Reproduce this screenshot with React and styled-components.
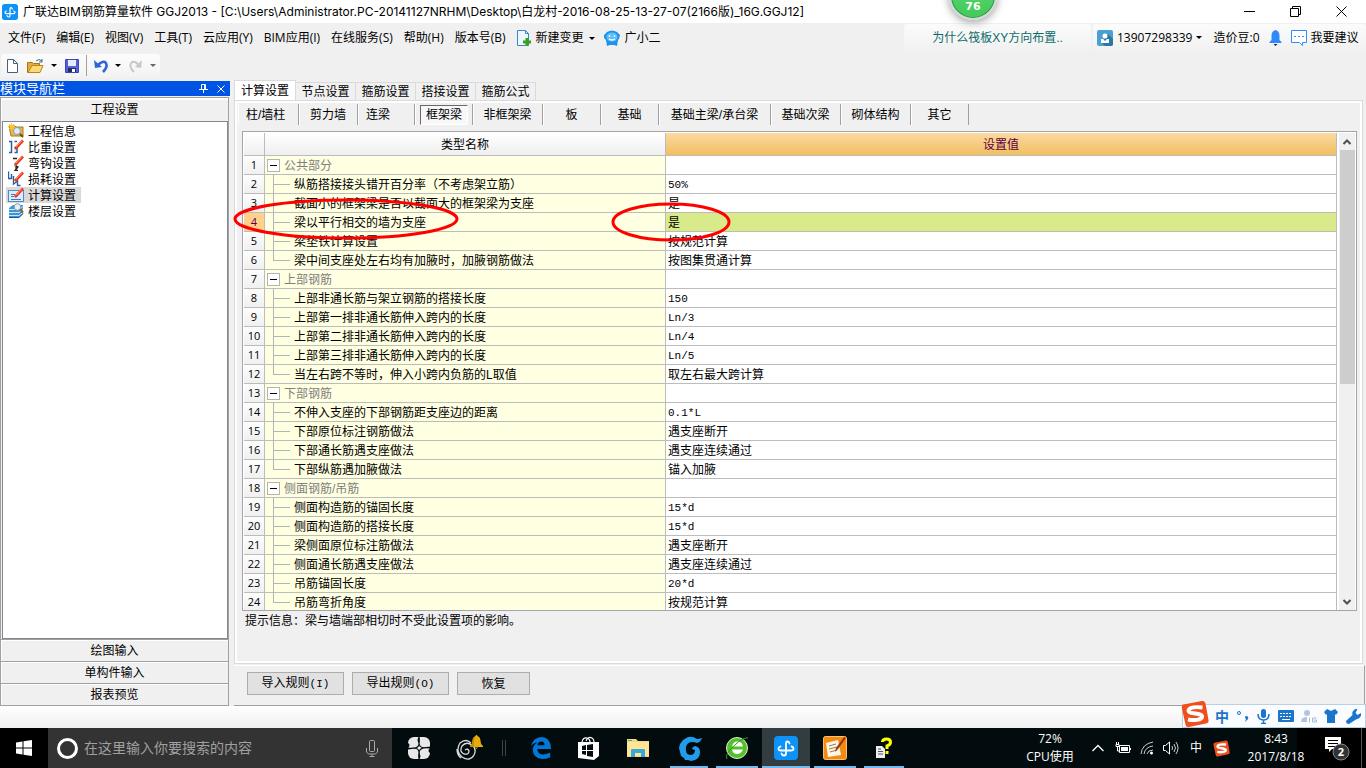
import React from "react";
import styled, { createGlobalStyle } from "styled-components";

const song = `"Liberation Sans", "Noto Sans CJK SC", sans-serif`;
const yahei = `"Open Sans", "Noto Sans CJK SC", sans-serif`;

const Global = createGlobalStyle`
  *, *::before, *::after { box-sizing: border-box; }
  html, body, #root { height: 100%; }
  body { margin: 0; background: #f0f0f0; overflow: hidden; }
  button { font: inherit; color: inherit; margin: 0; padding: 0; border: 0; background: none; border-radius: 0; }
  svg { display: block; flex: none; }
`;

const Screen = styled.div`
  position: relative;
  display: flex;
  flex-direction: column;
  height: 100vh;
  font: 12px/16px ${song};
  color: #000;
  white-space: nowrap;
`;
const Spacer = styled.div`flex: 1;`;

/* ---------- title bar ---------- */
const TitleBar = styled.header`
  display: flex;
  align-items: center;
  height: 23px;
  flex: none;
  background: #fff;
  font: 12px/20px ${yahei};
  padding: 0 2px;
`;
const Title = styled.h1`
  margin: 0 0 0 5px;
  font: 12px/22px Inter, "Noto Sans CJK SC", sans-serif;
`;
const WindowButton = styled.button`
  width: 46px;
  height: 20px;
  display: flex;
  align-items: center;
  justify-content: center;
`;
const SpeedBall = styled.div`
  position: absolute;
  top: -28px;
  left: 949px;
  width: 48px;
  height: 48px;
  border-radius: 50%;
  border: 2px solid #d5d8d5;
  background: linear-gradient(#5bd96b, #45c95c);
  box-shadow: inset 0 0 0 1px #239a48, 0 2px 8px #999;
  color: #fff;
  font: bold 11px/14px "DejaVu Sans", sans-serif;
  text-align: center;
  padding-top: 26px;
`;

/* ---------- menu ---------- */
const MenuBar = styled.nav`
  display: flex;
  align-items: center;
  flex: none;
  height: 28px;
  padding: 1px 0 0 8px;
  font: 12px/20px ${yahei};
`;
const MenuItem = styled.button`
  display: flex;
  align-items: center;
  gap: 5px;
  padding-top: 1px;
  margin-right: ${(p) => (p.$tight ? 9 : 11)}px;
  white-space: nowrap;
`;
const Caret = styled.span`
  width: 0;
  height: 0;
  border: 3px solid transparent;
  border-top-color: ${(p) => p.$color || "#000"};
  border-bottom: 0;
`;
const Tip = styled.a`
  align-self: stretch;
  width: 187px;
  margin-right: 2px;
  background: linear-gradient(#fbfbfb, #f1f1f1);
  border-radius: 3px;
  color: #0b6b6b;
  text-decoration: none;
  text-align: center;
  line-height: 29px;
  font-family: ${song};
`;
const Account = styled.div`
  align-self: stretch;
  display: flex;
  align-items: center;
  width: 273px;
  padding-left: 4px;
  background: linear-gradient(#fbfbfb, #f1f1f1);
  border-radius: 3px;
`;
const AccountItem = styled.button`
  display: flex;
  align-items: center;
  gap: 4px;
  margin-right: ${(p) => p.$after || 0}px;
  white-space: nowrap;
`;

/* ---------- tool bar ---------- */
const ToolRow = styled.div`
  flex: none;
  height: 29px;
  padding: 3px 0 0 1px;
`;
const ToolStrip = styled.div`
  display: flex;
  align-items: center;
  width: 159px;
  height: 23px;
  padding-left: 4px;
  border-radius: 3px;
  background: linear-gradient(#fcfcfc, #f3f3f3);
`;
const ToolButton = styled.button`
  display: flex;
  align-items: center;
  gap: 7px;
  margin-right: ${(p) => p.$after}px;
`;
const ToolLine = styled.span`
  width: 1px;
  height: 21px;
  margin-right: 7px;
  background: #a0a0a0;
`;

/* ---------- work area ---------- */
const Work = styled.div`
  display: flex;
  flex: 1;
  min-height: 0;
`;
const Side = styled.aside`
  display: flex;
  flex-direction: column;
  flex: none;
  width: 230px;
  padding-top: 1px;
`;
const SideTitle = styled.div`
  display: flex;
  align-items: center;
  height: 15px;
  flex: none;
  background: #0054e3;
  color: #fff;
  font-size: 13px;
  line-height: 15px;
  button { width: 18px; display: flex; justify-content: center; }
`;
const SideBody = styled.div`
  display: flex;
  flex-direction: column;
  flex: 1;
  min-height: 0;
  margin: 1px 1px 0 0;
  border: 1px solid #a0a0a0;
`;
const SideTab = styled.button`
  height: 22px;
  flex: none;
  border-top: 1px solid ${(p) => (p.$first ? "#fff" : "#a0a0a0")};
  box-shadow: inset 1px 1px 0 #fff;
  text-align: center;
`;
const SideList = styled.ul`
  flex: 1;
  min-height: 0;
  list-style: none;
  margin: 1px 0 0 1px;
  padding: 1px 3px;
  border: 1px solid #828790;
  background: #fff;
`;
const SideItem = styled.li`
  display: flex;
  align-items: center;
  width: 75px;
  height: 16px;
  gap: 4px;
  padding-left: 2px;
  background: ${(p) => (p.$on ? "#d9d9d9" : "none")};
  span { padding-top: 2px; }
`;

const Main = styled.main`
  display: flex;
  flex-direction: column;
  flex: 1;
  min-width: 0;
  padding: 0 1px 0 4px;
`;
const Tabs = styled.div`
  display: flex;
  align-items: flex-end;
  flex: none;
  height: 21px;
  margin-bottom: -1px;
`;
const Tab = styled.button`
  position: relative;
  height: ${(p) => (p.$on ? 21 : 19)}px;
  width: ${(p) => (p.$on ? 62 : 60)}px;
  line-height: 18px;
  text-align: center;
  border: 1px solid #dadada;
  border-left-width: ${(p) => (p.$on ? 1 : 0)}px;
  border-bottom-color: ${(p) => (p.$on ? "#fff" : "#dadada")};
  background: ${(p) => (p.$on ? "#fff" : "#f0f0f0")};
`;
const Panel = styled.section`
  position: relative;
  display: flex;
  flex-direction: column;
  flex: 1;
  min-height: 0;
  margin-right: 2px;
  border: 1px solid #dadada;
  box-shadow: inset 0 0 0 2px #fff;
  padding: 3px 5px 2px 7px;
`;
const Kinds = styled.div`
  display: flex;
  flex: none;
  height: 21px;
  margin: 0 0 6px -4px;
`;
const Kind = styled.button`
  width: ${(p) => p.$w}px;
  height: 21px;
  line-height: 20px;
  border-right: 1px solid #a0a0a0;
  box-shadow: inset 1px 0 0 #fff;
  text-align: ${(p) => (p.$left ? "left" : "center")};
  padding-left: ${(p) => (p.$left ? 8 : 0)}px;
  span {
    display: block;
    margin: 1px 4px 0 5px;
    height: 20px;
    line-height: 18px;
    border: 1px solid #fff;
    border-top-color: #696969;
    border-left-color: #696969;
    background: #f8f8f8;
  }
`;
const Sheet = styled.div`
  display: flex;
  flex: 1;
  min-height: 0;
  padding: 1px 1px 0 1px;
  border: 1px solid #a5a5a9;
  background: #fff;
`;
const Scroller = styled.div`
  flex: 1;
  min-width: 0;
  overflow: hidden;
`;
const Grid = styled.table`
  width: 100%;
  table-layout: fixed;
  border-collapse: separate;
  border-spacing: 0;
`;
const Head = styled.th`
  height: 23px;
  padding: 2px 0 0;
  font-weight: normal;
  color: ${(p) => (p.$hot ? "#5a0046" : "#000")};
  background: ${(p) => (p.$hot ? "linear-gradient(#fbd9a2, #f2bf60)" : "linear-gradient(#fff, #efefef)")};
  border-right: 1px solid #bcbcbc;
  border-bottom: 1px solid #bcbcbc;
`;
const Num = styled.th`
  height: 19px;
  padding: 0;
  font: 11px/16px "Open Sans", sans-serif;
  text-align: center;
  color: ${(p) => (p.$hot ? "#5a0046" : "#000")};
  background: ${(p) => (p.$hot ? "#ffd18a" : "linear-gradient(#fdfdfd, #f0f0f0)")};
  border-right: 1px solid #bcbcbc;
  border-bottom: 1px solid #bcbcbc;
`;
const Cell = styled.td`
  height: 19px;
  padding: ${(p) => (p.$name ? "0" : "2px 0 0 2px")};
  line-height: 16px;
  background: ${(p) => (p.$name ? "#ffffe1" : p.$hot ? "#d9ea8b" : "#fff")};
  border-right: 1px solid #bcbcbc;
  border-bottom: 1px solid #bcbcbc;
`;
const NameBox = styled.div`
  display: flex;
  align-items: flex-start;
  height: 18px;
  line-height: 21px;
  color: ${(p) => (p.$group ? "#808080" : "#000")};
`;
const Fold = styled.button`
  display: flex;
  align-items: center;
  justify-content: center;
  width: 13px;
  height: 13px;
  margin: 3px 4px 0 2px;
  border: 1px solid #b4b4b4;
  background: #fff;
  &::before { content: ""; width: 7px; height: 1px; background: #000; }
`;
const Branch = styled.span`
  display: grid;
  grid-template-rows: 10px 9px;
  width: 17px;
  margin: 0 4px 0 8px;
  i { border-left: 1px solid #b4b4b4; }
  i:first-child { border-bottom: 1px solid #b4b4b4; }
  i:last-child { border-left-color: ${(p) => (p.$last ? "transparent" : "#b4b4b4")}; }
`;
const Mono = styled.span`
  display: ${(p) => (p.$block ? "block" : "inline")};
  font: 11px/16px "Liberation Mono", monospace;
`;
const ScrollBar = styled.div`
  display: flex;
  flex-direction: column;
  align-items: center;
  width: 16px;
  margin: 0 0 0 2px;
  background: #f0f0f0;
  button { height: 17px; display: flex; align-items: center; }
`;
const Thumb = styled.div`
  width: 15px;
  height: 49%;
  margin-bottom: auto;
  background: #cdcdcd;
`;
const Hint = styled.p`
  flex: none;
  height: 50px;
  margin: 0;
  padding: 2px 0 0 3px;
`;
const Rings = styled.svg`
  position: absolute;
  top: 96px;
  left: -3px;
`;
const Actions = styled.footer`
  display: flex;
  flex: none;
  align-items: flex-start;
  gap: 8px;
  height: 41px;
  margin-top: 1px;
  padding: 6px 0 0 13px;
  border-top: 1px solid #fff;
  border-right: 1px solid #a0a0a0;
  border-bottom: 1px solid #a0a0a0;
`;
const Action = styled.button`
  width: ${(p) => (p.$short ? 73 : 97)}px;
  height: 23px;
  border: 1px solid #adadad;
  background: #e1e1e1;
`;
const Status = styled.div`
  flex: none;
  height: 22px;
  background: linear-gradient(#fff, #f0f0f0);
`;

/* ---------- input method bar ---------- */
const Ime = styled.div`
  position: absolute;
  right: 0;
  bottom: 40px;
  display: flex;
  align-items: center;
  gap: 7px;
  height: 24px;
  padding: 0 4px 0 32px;
  border: 1px solid #b9cfe4;
  background: #fafcff;
  color: #1b75cc;
  font: bold 14px/20px "Noto Sans CJK SC", sans-serif;
`;
const ImeLogo = styled.div`
  position: absolute;
  left: -2px;
  bottom: -1px;
`;

/* ---------- task bar ---------- */
const TaskBar = styled.div`
  display: flex;
  flex: none;
  height: 40px;
  background: #020b0e;
  color: #fff;
  font: 12px/18px ${yahei};
`;
const Start = styled.button`
  display: flex;
  align-items: center;
  justify-content: center;
  width: 48px;
  background: #000;
`;
const Search = styled.label`
  display: flex;
  align-items: center;
  gap: 5px;
  width: 344px;
  padding: 0 14px 0 8px;
  background: #333;
  input {
    flex: 1;
    min-width: 0;
    border: 0;
    padding: 0;
    outline: 0;
    background: none;
    color: #aaa;
    font: 14px/20px ${yahei};
  }
  input::placeholder { color: #a0a0a0; opacity: 1; }
`;
const Task = styled.button`
  display: flex;
  align-items: center;
  justify-content: center;
  width: ${(p) => p.$w || 49}px;
  background: ${(p) => (p.$on ? "#323d41" : "none")};
  position: relative;
  &::after {
    content: "";
    position: absolute;
    bottom: 0;
    left: ${(p) => (p.$on ? 0 : 4)}px;
    right: ${(p) => (p.$on ? 0 : 4)}px;
    height: 2px;
    background: ${(p) => (p.$run ? "#76b9ed" : "none")};
  }
`;
const Tray = styled.div`
  display: flex;
  align-items: center;
  gap: 9px;
  padding-right: 13px;
  span { padding: 0 2px; }
`;
const Stack = styled.div`
  width: ${(p) => p.$w}px;
  text-align: center;
  padding-top: 2px;
  background: ${(p) => (p.$edge ? "linear-gradient(90deg, transparent 82%, #000 82%)" : "none")};
`;
const Notice = styled.button`
  position: relative;
  display: flex;
  align-items: center;
  width: 57px;
  padding-left: 16px;
  background: #000;
  border-right: 4px solid #000;
  box-shadow: inset -1px 0 0 #555;
`;

/* ---------- drawings ---------- */
const Svg = ({ w = 16, h = w, box = `0 0 ${w} ${h}`, children, ...r }) => (
  <svg width={w} height={h} viewBox={box} fill="none" aria-hidden="true" {...r}>{children}</svg>
);
const AppIcon = ({ size = 16 }) => (
  <Svg w={size} box="0 0 24 24">
    <rect width="24" height="24" rx="4" fill="#0d93f7" />
    <path d="M15.500 7.500Q15 5.500 13.500 5.500T12 7.500v10q0 2-2 2t-2.500-2M6.500 10.500Q4.500 11 4.500 12.700T7 14.500h10q2.500 0 2.500-1.800t-2-2.200" stroke="#fff" strokeWidth="1.800" strokeLinecap="round" />
  </Svg>
);
const Sogou = ({ size = 28 }) => (
  <Svg w={size} box="0 0 28 28">
    <path d="M2.500 4.500 21 1q3-.5 3.500 2.500L27.500 20q.5 3-2.500 3.500L8 27q-3 .5-3.500-2.500L.8 8Q.4 5 2.500 4.500Z" fill="#f04e1a" />
    <path d="M21.500 7.500Q8 6 7.500 10.500c0 4 13.500 2 13.500 6 0 4-9 4-14 3" stroke="#fff" strokeWidth="4" />
  </Svg>
);
const pen = <g><path d="m6 12 .5-3 1.500 1.500z" fill="#f3d9a8" /><path d="m6 9 8-8.500 2 2-8 8.500z" fill="#ee3a20" /><path d="m8 8 6-6.500" stroke="#ff9a80" /></g>;
const sideIcons = [
  <Svg key="a"><path d="M1 3h6l1 1h7v9H3z" fill="#e9bb45" stroke="#a67b1c" /><circle cx="9" cy="8" r="3.500" fill="#dbeeff" stroke="#8a97a6" /><path d="m12 11 3 3" stroke="#744a12" strokeWidth="2" /><path d="M3.500 0v7M0 3.500h7M1 1l5 5M6 1 1 6" stroke="#ffc51c" /></Svg>,
  <Svg key="b"><path d="M1 2.500h2.500v11H1M6.500 2.500H9M6.500 8.500H9v5H6.500" stroke="#2b5fa5" strokeWidth="1.500" />{pen}</Svg>,
  <Svg key="c"><path d="M5 3.500h4M8 9v6M6 10l4 2-3 3.500h3" stroke="#222" strokeWidth="1.300" />{pen}</Svg>,
  <Svg key="d"><path d="M.5.5v7h3V3M5.500 5v8l4-3v4.500h3" stroke="#2b5fa5" strokeWidth="1.400" />{pen}</Svg>,
  <Svg key="e"><rect x=".5" y="3.500" width="15" height="11" fill="#dcecff" stroke="#5586c5" /><path d="M3 7.500h4M3 9.500h3M3 12.500h10" stroke="#3c78bf" />{pen}</Svg>,
  <Svg key="f"><path d="m1 5 4-3h10v9l-4 4H1z" fill="#3f95d6" /><path d="M1 6.500h10l4-3M1 9.500h10l4-3M1 12.500h10l4-3" stroke="#c9e7fb" /><path d="M1 14.500h10l4-4" stroke="#155a9c" /><circle cx="9.500" cy="4" r="3.300" fill="#e4f0fa" stroke="#8a98a6" /><path d="m12 6.500 3 3" stroke="#96600f" strokeWidth="2" /></Svg>,
];
const Mic = ({ w, h, color }) => (
  <Svg w={w} h={h} box="0 0 12 17"><rect x="3.500" y=".5" width="5" height="11" rx="1" stroke={color} /><path d="M.5 8v4l2 2h7l2-2V8M6 14v2.500M3.500 16.500h5" stroke={color} /></Svg>
);

/* ---------- data ---------- */
const menus = ["文件(F)", "编辑(E)", "视图(V)", "工具(T)", "云应用(Y)", "BIM应用(I)", "在线服务(S)", "帮助(H)", "版本号(B)"];
const sideItems = ["工程信息", "比重设置", "弯钩设置", "损耗设置", "计算设置", "楼层设置"];
const tabs = ["计算设置", "节点设置", "箍筋设置", "搭接设置", "箍筋公式"];
const kinds = [["柱/墙柱", 61, 1], ["剪力墙", 59], ["连梁", 57, 1], ["框架梁", 58], ["非框架梁", 70], ["板", 58], ["基础", 58], ["基础主梁/承台梁", 112], ["基础次梁", 70], ["砌体结构", 70], ["其它", 58]];
const rows = [
  ["公共部分"],
  ["纵筋搭接接头错开百分率（不考虑架立筋）", "50%"],
  ["截面小的框架梁是否以截面大的框架梁为支座", "是"],
  ["梁以平行相交的墙为支座", "是"],
  ["梁垫铁计算设置", "按规范计算"],
  ["梁中间支座处左右均有加腋时，加腋钢筋做法", "按图集贯通计算"],
  ["上部钢筋"],
  ["上部非通长筋与架立钢筋的搭接长度", "150"],
  ["上部第一排非通长筋伸入跨内的长度", "Ln/3"],
  ["上部第二排非通长筋伸入跨内的长度", "Ln/4"],
  ["上部第三排非通长筋伸入跨内的长度", "Ln/5"],
  ["当左右跨不等时，伸入小跨内负筋的L取值", "取左右最大跨计算"],
  ["下部钢筋"],
  ["不伸入支座的下部钢筋距支座边的距离", "0.1*L"],
  ["下部原位标注钢筋做法", "遇支座断开"],
  ["下部通长筋遇支座做法", "遇支座连续通过"],
  ["下部纵筋遇加腋做法", "锚入加腋"],
  ["侧面钢筋/吊筋"],
  ["侧面构造筋的锚固长度", "15*d"],
  ["侧面构造筋的搭接长度", "15*d"],
  ["梁侧面原位标注筋做法", "遇支座断开"],
  ["侧面通长筋遇支座做法", "遇支座连续通过"],
  ["吊筋锚固长度", "20*d"],
  ["吊筋弯折角度", "按规范计算"],
];
const isLatin = (s) => /^[\x20-\x7e]+$/.test(s);
const SELECTED = 3;

function Row({ row, index }) {
  const [name, value] = row;
  const next = rows[index + 1];
  const hot = index === SELECTED;
  return (
    <tr>
      <Num scope="row" $hot={hot}>{index + 1}</Num>
      <Cell $name>
        <NameBox $group={!value}>
          {value ? <Branch $last={!next || !next[1]}><i /><i /></Branch> : <Fold aria-label="折叠" />}
          <span>{name}</span>
        </NameBox>
      </Cell>
      <Cell $hot={hot}>{value && isLatin(value) ? <Mono $block>{value}</Mono> : value}</Cell>
    </tr>
  );
}

export default function App() {
  return (
    <Screen>
      <Global />
      <TitleBar>
        <AppIcon />
        <Title>广联达BIM钢筋算量软件 GGJ2013 - [C:\Users\Administrator.PC-20141127NRHM\Desktop\白龙村-2016-08-25-13-27-07(2166版)_16G.GGJ12]</Title>
        <Spacer />
        <WindowButton aria-label="最小化"><Svg w={11}><path d="M0 5.500h11" stroke="#000" /></Svg></WindowButton>
        <WindowButton aria-label="还原"><Svg w={11}><path d="M.5 2.500h8v8h-8zM2.500 2.500v-2h8v8h-2" stroke="#000" /></Svg></WindowButton>
        <WindowButton aria-label="关闭"><Svg w={11}><path d="m.5.5 10 10m0-10-10 10" stroke="#000" /></Svg></WindowButton>
      </TitleBar>

      <MenuBar>
        {menus.map((m) => <MenuItem key={m}>{m}</MenuItem>)}
        <MenuItem $tight>
          <Svg w={14} h={16}><path d="M.5.5h8l3 3v12H.5z" fill="#eef7ff" stroke="#3d87c5" /><path d="M8.500.5v3h3" stroke="#3d87c5" /><path d="M10 8v8M6 12h8" stroke="#38a020" strokeWidth="3" /></Svg>
          新建变更 <Caret />
        </MenuItem>
        <MenuItem>
          <Svg><path d="M3 2q5-3 10 0l3 3-1 4-1 1-1 6-3-1H6l-3 1-1-6-2-2V5z" fill="#1f93ea" /><ellipse cx="8" cy="7" rx="5.500" ry="4.500" fill="#5dc0fb" /><path d="M5.500 5v2M10.500 5v2M5 9q3 2 6 0" stroke="#fff" strokeWidth="1.300" /></Svg>
          广小二
        </MenuItem>
        <Spacer />
        <Tip href="#">为什么筏板XY方向布置..</Tip>
        <Account>
          <AccountItem $after={11}>
            <Svg><rect width="16" height="16" rx="2" fill="#4ba0d0" /><path d="m5 13 6-9 5 5v5q0 2-2 2H8z" fill="#2b76a5" /><circle cx="8" cy="6" r="2.500" fill="#fff" /><path d="M4 9h2l2 2 2-2h2v4H4z" fill="#fff" /></Svg>
            13907298339 <Caret />
          </AccountItem>
          <AccountItem $after={9}>造价豆:0</AccountItem>
          <AccountItem $after={9} aria-label="通知">
            <Svg w={13} h={16}><path d="M6.500 0q4 1 4 6v4l2 2v1H.5v-1l2-2V6q0-5 4-6z" fill="#2f8bfb" /><path d="M4.500 14h4l-2 2z" fill="#123" /></Svg>
          </AccountItem>
          <AccountItem>
            <Svg><path d="M.5.5h15v12h-4v3l-3-3h-8z" stroke="#2f8bfb" fill="#fff" /><path d="M3 6.500h10" stroke="#2f8bfb" strokeDasharray="2 2" /></Svg>
            我要建议
          </AccountItem>
        </Account>
      </MenuBar>

      <ToolRow>
        <ToolStrip>
          <ToolButton $after={8} aria-label="新建"><Svg w={14} h={14}><path d="M2.500.5h6l4 4v9h-10z" fill="#fff" stroke="#44617f" /><path d="M8.500.5v4h4" stroke="#44617f" /></Svg></ToolButton>
          <ToolButton $after={8} aria-label="打开"><Svg w={17} h={16}><path d="M.5 4.500h5l1 1h6v9H.5z" fill="#e2ad3c" stroke="#a8751a" /><path d="m1 14.500 4-7h11l-3 7z" fill="#ffd876" stroke="#b98420" /><path d="M9 3q3-3 6 0m0-2v3h-3" stroke="#45698f" /></Svg><Caret /></ToolButton>
          <ToolButton $after={7} aria-label="保存"><Svg w={14} h={14}><path d="M.5.5h13v13H.5z" fill="#5563cf" stroke="#3c46b4" /><path d="M3 1h8v6H3z" fill="#e7ebff" /><path d="M3 9h8v4H3z" fill="#222b6c" /><path d="M7 10h3v3H7z" fill="#fff" /></Svg></ToolButton>
          <ToolLine />
          <ToolButton $after={8} aria-label="撤销"><Svg w={14} h={14}><path d="M4 6q4-4 7-3 4 4-2 10" stroke="#2d67d6" strokeWidth="2.500" /><path d="m0 1 1 8 7-1z" fill="#2d67d6" /></Svg><Caret /></ToolButton>
          <ToolButton $after={0} aria-label="重做"><Svg w={14} h={14}><path d="M10 6Q6 2 3 3q-4 4 2 10" stroke="#c8c8c8" strokeWidth="2" /><path d="m13 1-1 8-6-1z" fill="#c8c8c8" /></Svg><Caret $color="#666" /></ToolButton>
        </ToolStrip>
      </ToolRow>

      <Work>
        <Side>
          <SideTitle>
            模块导航栏
            <Spacer />
            <button aria-label="固定"><Svg w={9}><path d="M2.500 5V.5h4V5M0 5.500h9M4.500 6v3M5.500 1v4" stroke="#fff" /></Svg></button>
            <button aria-label="关闭"><Svg w={8}><path d="m.5.5 7 7m0-7-7 7" stroke="#fff" /></Svg></button>
          </SideTitle>
          <SideBody>
            <SideTab $first>工程设置</SideTab>
            <SideList>
              {sideItems.map((t, i) => <SideItem key={t} $on={i === 4}>{sideIcons[i]}<span>{t}</span></SideItem>)}
            </SideList>
            <SideTab>绘图输入</SideTab>
            <SideTab>单构件输入</SideTab>
            <SideTab>报表预览</SideTab>
          </SideBody>
        </Side>

        <Main>
          <Tabs>{tabs.map((t, i) => <Tab key={t} $on={i === 0}>{t}</Tab>)}</Tabs>
          <Panel>
            <Kinds>
              {kinds.map(([t, w, left]) => <Kind key={t} $w={w} $left={left}>{t === "框架梁" ? <span>{t}</span> : t}</Kind>)}
            </Kinds>
            <Sheet>
              <Scroller>
                <Grid>
                  <colgroup><col width="21" /><col width="401" /><col /></colgroup>
                  <thead><tr><Head /><Head>类型名称</Head><Head $hot>设置值</Head></tr></thead>
                  <tbody>{rows.map((r, i) => <Row key={i} row={r} index={i} />)}</tbody>
                </Grid>
              </Scroller>
              <ScrollBar>
                <button aria-label="向上"><Svg w={8} h={6}><path d="m.5 5 3.500-3.500L7.500 5" stroke="#505050" strokeWidth="2" /></Svg></button>
                <Thumb />
                <button aria-label="向下"><Svg w={8} h={6}><path d="m.5 1 3.500 3.500L7.500 1" stroke="#505050" strokeWidth="2" /></Svg></button>
              </ScrollBar>
            </Sheet>
            <Hint>提示信息：梁与墙端部相切时不受此设置项的影响。</Hint>
            <Rings width="502" height="48" viewBox="0 0 502 48" fill="none" stroke="#f00" strokeWidth="3" aria-hidden="true">
              <ellipse cx="114" cy="22" rx="111" ry="19" />
              <ellipse cx="439" cy="25" rx="58" ry="18" />
            </Rings>
          </Panel>
          <Actions>
            <Action>导入规则<Mono>(I)</Mono></Action>
            <Action>导出规则<Mono>(O)</Mono></Action>
            <Action $short>恢复</Action>
          </Actions>
        </Main>
      </Work>
      <Status />

      <TaskBar>
        <Start aria-label="开始"><Svg w={16}><path d="m0 2.500 6.500-1v6H0zM7.500 1.300 16 0v7.500H7.500zM0 8.500h6.500v6l-6.500-1zM7.500 8.500H16V16l-8.500-1.300z" fill="#fff" /></Svg></Start>
        <Search>
          <Svg w={23}><circle cx="11.500" cy="11.500" r="9" stroke="#fff" strokeWidth="3" /></Svg>
          <input placeholder="在这里输入你要搜索的内容" aria-label="搜索" />
          <Mic w={12} h={17} color="#aaa" />
        </Search>
        <Task $w={53} aria-label="浏览器">
          <Svg w={22}>
            <rect width="22" height="22" rx="6" fill="#e8e8e8" />
            <path d="M0 11q3-3 0-5M22 11q-3 3 0 5M11 0q-3 3 0 6M11 22q3-3 0-5" fill="#020b0e" />
            <path d="M11 0q-1 6 1 9t10 1M22 11q-6-1-9 1t-2 10M11 22q1-7-1-9.500T0 12M0 11q7 1 9.500-1T11 0" stroke="#020b0e" strokeWidth="1.200" />
          </Svg>
        </Task>
        <Task $w={50} aria-label="消息">
          <Svg w={28} h={26}><path d="M15 8Q10 3 4 8q-5 8 2 14 8 5 12-2 3-6-2-10-6-4-10 1-3 6 2 8 5 1 5-3-1-3-4-1M1 14q0 6 4 9" stroke="#ddd" strokeWidth="1.300" /><path d="M20.500 0q1 0 1 1 3 1 3 5 0 3 2.500 5v1H14v-1q2.500-2 2.500-5 0-4 3-5 0-1 1-1zM19 12.500h3l-1.500 1.500z" fill="#e6ac0c" /><path d="M19.500 1.500q-2 4-1.500 10.500h-4v-1q2.500-2 2.500-5 0-4 3-4.500z" fill="#c98a06" /></Svg>
        </Task>
        <Task $w={18} aria-label="分隔"><Svg w={5} h={16}><path d="M.5 0v16M3.500 0v16" stroke="#444" /></Svg></Task>
        <Task $w={55} aria-label="Edge"><Svg w={22} box="0 0 24 24"><path d="M1 11Q3 0 13 0q10 1 10 13H8q0 6 7 6 4 0 7-2v5q-4 2-9 2Q3 23 3 14q0-5 5-8-5 0-7 5zM8 9h8q0-4-4-4-3 0-4 4z" fill="#0078d7" /></Svg></Task>
        <Task $w={42} aria-label="应用商店"><Svg w={22} h={24}><path d="M4 6q1-5 5-4 3 1 3 4M8 5q2-5 6-3 2 1 2 4" stroke="#fff" strokeWidth="1.200" /><path d="M0 6h21v14l-5 4-16-2z" fill="#fff" /><path d="m4 10 4-1v5H4zm5-1 6-1v6H9zm-5 6h4v4l-4-1zm5 0h6v6l-6-1z" fill="#020b0e" /></Svg></Task>
        <Task $w={56} aria-label="文件资源管理器"><Svg w={22} h={20}><path d="M0 1h9l2 2h11v16H0z" fill="#f7d778" /><path d="M0 4h22v14H0z" fill="#ffe694" /><path d="M1 2h4v1H1z" fill="#38a8dc" /><path d="M4 19v-7q0-1 1-1h12q1 0 1 1v7h-4v-4H8v4z" fill="#38a8dc" /></Svg></Task>
        <Task $w={46} $run aria-label="G"><Svg w={25} h={25}><path d="M25 2q-1 4-5 5-9-3-11 4-1 7 4 8 5 0 5-5l-3-1q0-2 3-3 5 1 5 6 0 6-5 8l-4 1-3-1-3 0-1-2-3-2-1-4-1-4 1-4 3-4 5-3q5-1 9 2 3 0 5-1z" fill="#229be9" /></Svg></Task>
        <Task $w={50} $run aria-label="安全浏览器"><Svg w={24}><circle cx="12" cy="12" r="10.500" fill="#55bf2c" stroke="#d8f7ca" /><path d="M7 10.500q1-5 5.500-5t5.500 5zM7 13.500h11q-2 4.500-6 4.500t-5-4.500z" fill="#fff" /><path d="M2 23Q-1 18 11 8 19 1 23 2" stroke="#2c9a1c" /></Svg></Task>
        <Task $w={48} $run $on aria-label="广联达"><AppIcon size={24} /></Task>
        <Task $w={50} $run aria-label="编辑器"><Svg w={24}><rect x=".5" y=".5" width="23" height="23" rx="2" fill="#f48a12" stroke="#ffc16a" /><path d="m3 7 12-3 3 15-13 2z" fill="#fff8e7" /><path d="m6 10 7-2M6 13l8-2M7 16l7-2" stroke="#a67542" /><path d="m12 16 1-4 8-11 2 1-8 11z" fill="#9a3410" /></Svg></Task>
        <Task $w={48} $run aria-label="帮助"><Svg w={20} h={22}><path d="M2 9h6l3 3v9H2z" fill="#eee" /><path d="M4 12h3M4 14.500h5M4 17h5" stroke="#555" /><path d="M8.500 5q0-3 4-3t4 3q0 3-3.500 4v3" stroke="#ff0" strokeWidth="3" /><path d="M11.500 14h3v3h-3z" fill="#ff0" /></Svg></Task>
        <Spacer />
        <Stack $w={80}>72%<br />CPU使用</Stack>
        <Tray>
          <Svg w={16} h={16}><path d="m2.500 11 5.500-5.500 5.500 5.500" stroke="#fff" strokeWidth="1.300" /></Svg>
          <Svg w={16} h={14}><path d="M4.500 4.500h10v7h-10zM15.500 7v2M1 3.500h3v2H1zM1.500 1v2M3.500 1v2M2.500 6v4h2" stroke="#fff" /><path d="M6 6h7v4H6z" fill="#fff" /></Svg>
          <Svg w={14} h={14}><path d="M1 13Q2 3 13 1M4 13q1-7 9-8M7 13q1-4 6-4" stroke="#ccc" /><circle cx="11.500" cy="12" r="1.500" fill="#fff" /></Svg>
          <Svg w={16} h={14}><path d="M.5 4.500h2l4-3.500v12l-4-3.500h-2z" stroke="#fff" /><path d="M9 5q1 2 0 4M11 3q3 4 0 8M13 1q4 6 0 12" stroke="#ccc" /></Svg>
          <span>中</span>
          <Sogou size={17} />
        </Tray>
        <Stack $w={66} $edge>8:43<br />2017/8/18</Stack>
        <Notice aria-label="通知中心">
          <Svg w={26} h={26}><path d="M0 2h16v12H7l-3 3v-3H0z" fill="#fff" /><path d="M3 5.500h10M3 8.500h10M3 11.500h7" stroke="#000" /><circle cx="16" cy="17" r="8" fill="#333" stroke="#888" /><text x="16" y="21" fill="#fff" fontSize="11" fontWeight="bold" fontFamily="Open Sans" textAnchor="middle">2</text></Svg>
        </Notice>
      </TaskBar>

      <Ime>
        <ImeLogo><Sogou /></ImeLogo>
        <span>中</span>
        <Svg w={14} h={12}><circle cx="3" cy="3" r="1.500" stroke="#1b75cc" /><path d="M10 6q3 0 2 3l-3 3 1-3q-2-2 0-3z" fill="#1b75cc" /></Svg>
        <Svg w={14} h={15}><rect x="4" width="5" height="9" rx="2.500" fill="#1b75cc" /><path d="M1 5q0 6 5.500 6T12 5M6.500 11v4M4 14.500h5" stroke="#1b75cc" strokeWidth="1.500" /></Svg>
        <Svg w={16} h={12}><rect width="16" height="12" rx="1" fill="#1b75cc" /><path d="M2 3.500h12M2 6.500h12" stroke="#fff" strokeDasharray="2 1" /><path d="M4 9.500h8" stroke="#fff" /></Svg>
        <Svg w={16} h={15}><circle cx="6" cy="4" r="3" fill="#b4c4dc" /><path d="M0 13q0-5 6-5t6 5z" fill="#b4c4dc" /><path d="M6 8h10v6H6z" fill="#fff" /><path d="M8.500 8.500v5M15.500 9h-4v4h4v-2h-3" stroke="#a7b8d2" /></Svg>
        <Svg w={14} h={14}><path d="m3 0 4 2 4-2 3 3-2 3-1-1v9H3V5L2 6 0 3z" fill="#1b75cc" /></Svg>
        <Svg w={16} h={15}><path d="m1 12 6.500-6q-1-4 3-6h2l-2 4 2 2 3.500-2q1 5-5 6.500L4 15q-3 0-3-3z" fill="#1b75cc" /></Svg>
      </Ime>
      <SpeedBall>76</SpeedBall>
    </Screen>
  );
}
